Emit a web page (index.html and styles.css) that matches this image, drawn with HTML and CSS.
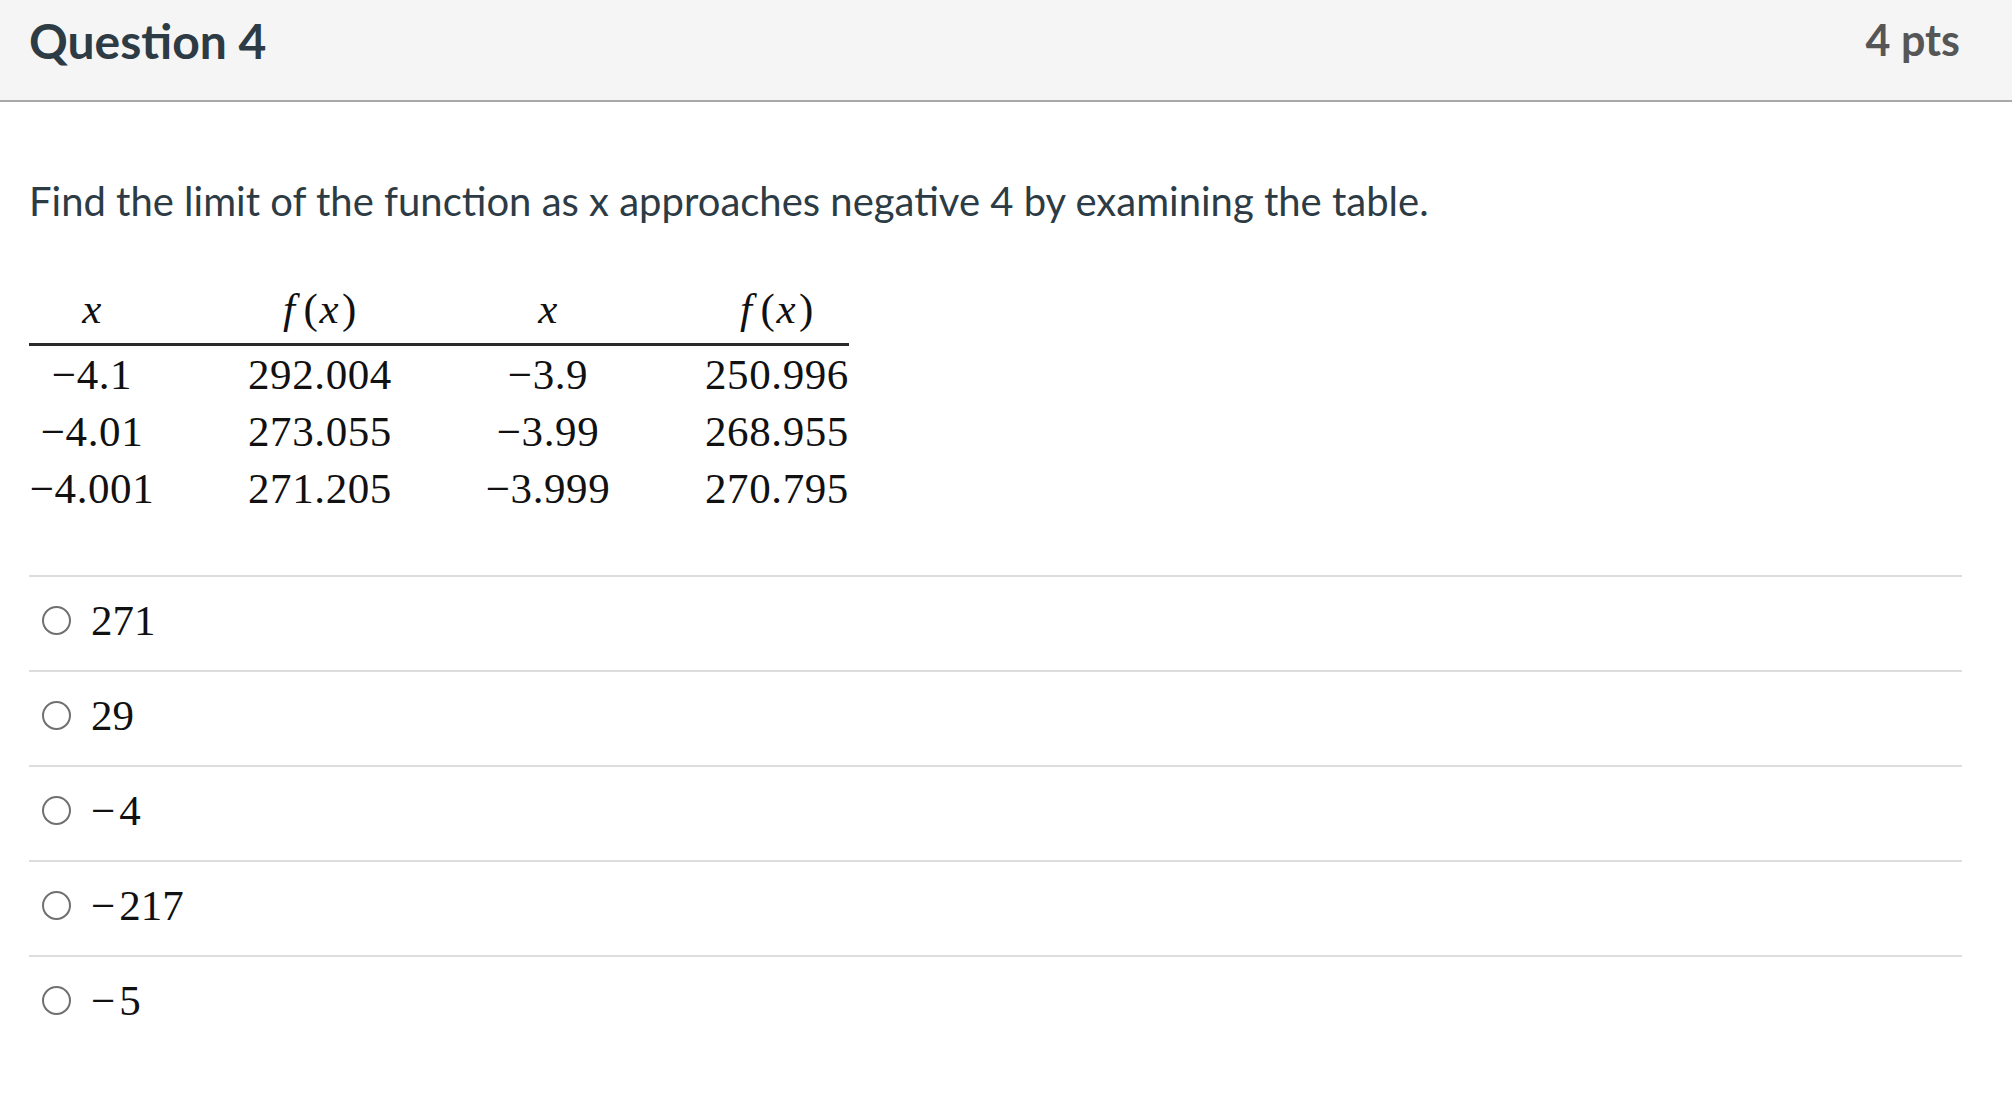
FILE: index.html
```html
<!DOCTYPE html>
<html lang="en">
<head>
<meta charset="utf-8">
<title>Question 4</title>
<link rel="stylesheet" href="styles.css">
</head>
<body>
<div class="question">
  <div class="q-header">
    <h2 class="q-title">Question 4</h2>
    <div class="q-points">4 pts</div>
  </div>
  <div class="q-body">
    <p class="q-text">Find the limit of the function as x approaches negative 4 by examining the table.</p>
    <table class="values">
      <thead>
        <tr>
          <th><i>x</i></th>
          <th><i class="fn">f</i>(<i class="arg">x</i>)</th>
          <th><i>x</i></th>
          <th class="last"><i class="fn">f</i>(<i class="arg">x</i>)</th>
        </tr>
      </thead>
      <tbody>
        <tr><td>−4.1</td><td>292.004</td><td>−3.9</td><td class="last">250.996</td></tr>
        <tr><td>−4.01</td><td>273.055</td><td>−3.99</td><td class="last">268.955</td></tr>
        <tr><td>−4.001</td><td>271.205</td><td>−3.999</td><td class="last">270.795</td></tr>
      </tbody>
    </table>
    <div class="answers">
      <label class="answer"><span class="radio"></span><span class="ans-text">271</span></label>
      <label class="answer"><span class="radio"></span><span class="ans-text">29</span></label>
      <label class="answer"><span class="radio"></span><span class="ans-text"><span class="minus">−</span>4</span></label>
      <label class="answer"><span class="radio"></span><span class="ans-text"><span class="minus">−</span>217</span></label>
      <label class="answer"><span class="radio"></span><span class="ans-text"><span class="minus">−</span>5</span></label>
    </div>
  </div>
</div>
</body>
</html>
```

FILE: styles.css
```css
html, body {
  margin: 0;
  padding: 0;
  background: #ffffff;
}

body {
  font-family: Lato, "Open Sans", "Liberation Sans", sans-serif;
  color: #2d3b45;
}

.q-header {
  display: flex;
  justify-content: space-between;
  align-items: flex-start;
  height: 102px;
  box-sizing: border-box;
  padding: 12px 52px 0 29px;
  background: #f5f5f5;
  border-bottom: 2px solid #a8a8a8;
}

.q-title {
  margin: 0;
  font-size: 48px;
  font-weight: 700;
  line-height: 1.2;
  color: #2d3b45;
}

.q-points {
  margin-top: 2px;
  font-size: 43px;
  font-weight: 700;
  line-height: 1.2;
  color: #565656;
}

.q-body {
  margin: 0 50px 0 29px;
}

.q-text {
  margin: 75px 0 0 0;
  font-size: 40px;
  line-height: 1.2;
  color: #2d3b45;
}

.values {
  margin-top: 55px;
  border-collapse: separate;
  border-spacing: 0;
  font-family: "Liberation Serif", "Times New Roman", serif;
  font-size: 43px;
  letter-spacing: 0.6px;
  color: #111;
}

.values th,
.values td {
  padding: 0;
  line-height: 57px;
  text-align: center;
  white-space: nowrap;
  font-weight: 400;
}

.values th {
  padding-bottom: 6px;
  border-bottom: 3px solid #2a2a2a;
}

.values th:nth-child(1),
.values td:nth-child(1) { width: 126px; }
.values th:nth-child(2),
.values td:nth-child(2) { width: 330px; }
.values th:nth-child(3),
.values td:nth-child(3) { width: 126px; }
.values .last {
  width: 143px;
  padding-left: 94px;
}

.values i { font-style: italic; }
.values .fn { margin-right: 8px; }
.values .arg { margin: 0 3px 0 1px; }

.answers {
  margin-top: 58px;
}

.answer {
  display: flex;
  align-items: center;
  height: 95px;
  box-sizing: border-box;
  padding-bottom: 6px;
  border-top: 2px solid #dddddd;
}

.radio {
  width: 29px;
  height: 29px;
  box-sizing: border-box;
  margin-left: 13px;
  margin-right: 20px;
  border: 2px solid #707070;
  border-radius: 50%;
  background: #fff;
  flex: none;
}

.ans-text {
  font-family: "Liberation Serif", "Times New Roman", serif;
  font-size: 43px;
  color: #111;
}

.minus {
  margin-right: 4px;
}
```
